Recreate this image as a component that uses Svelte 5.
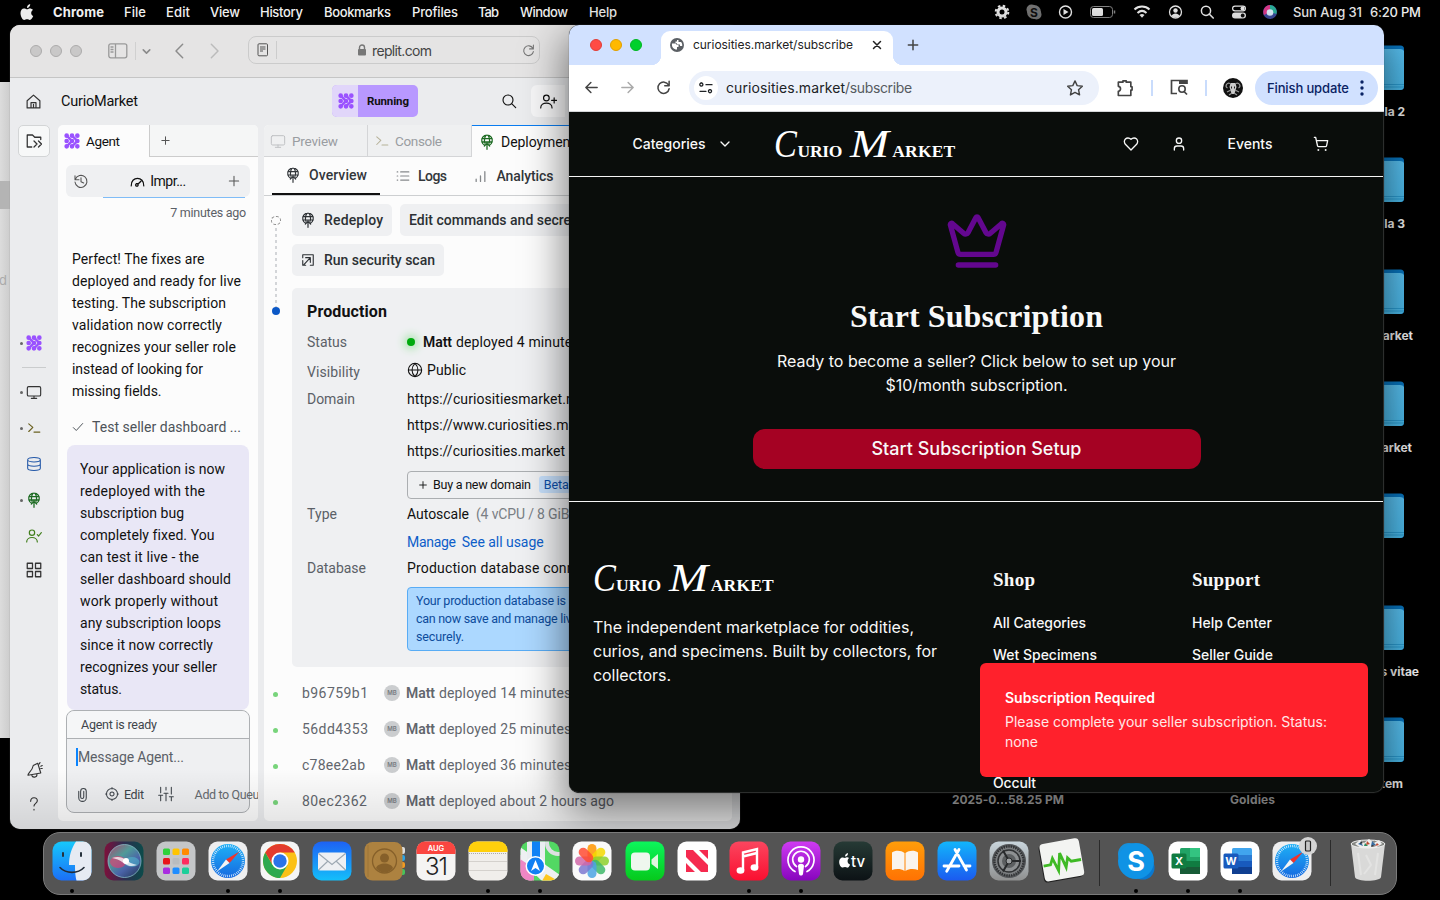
<script>
  // Tracks a label so that it takes up the given width.
  function fit(node, width) {
    if (!width) return;
    const natural = node.getBoundingClientRect().width;
    const n = node.textContent.length;
    if (n > 1) node.style.letterSpacing = (width - natural) / (n - 1) + 'px';
  }

  const icons = {
    home: 'M3 11 12 3l9 8v10H3zM8.500 21v-7.500h7V21M12 21v-5',
    files: 'M9 20H3V4h7l3 3h8v3M12 12l4 4-4 4M18 12l4 4-4 4',
    monitor: 'M4 4h16a2 2 0 0 1 2 2v10a2 2 0 0 1-2 2H4a2 2 0 0 1-2-2V6a2 2 0 0 1 2-2zM8 21.500h8M12 18v3',
    shell: 'M3 5l7 6-7 7M12 19h10',
    db: 'M2.500 5.500C2.500 1 21.500 1 21.500 5.500S2.500 10 2.500 5.500v13c0 4.500 19 4.500 19 0v-13M2.500 12c0 4.500 19 4.500 19 0',
    globeUp: 'M9 17a8 8 0 1 1 6 0M4.300 7h15.400M4.300 12h15.400M9 14C7 8 9 2 12 1.500c3 .5 5 6.500 3 12.500M12 23V12M8 18l4-4 4 4',
    userCheck: 'M9 11a4 4 0 1 0 0-8 4 4 0 0 0 0 8M1 21c0-9 16-9 16 0M17 10l2 2 4-5',
    grid: 'M3 3h7v7H3zM14 3h7v7h-7zM3 14h7v7H3zM14 14h7v7h-7z',
    horn: 'M11 6l6-3 4 13-17 3c-1-2 6-6 7-13zM9 19c1 4 7 3 7-1M19 4l1-2M21 7l2-1M21 10h2',
    help: 'M7 8c0-7 10-7 10-1 0 4-5 4-5 8M12 20v1',
    plus: 'M12 4v16M4 12h16',
    history: 'M3 4v6h6M3.500 9.500a9 9 0 1 1-.5 4M12 7v6l4 2',
    gauge: 'M2 19C1 3 23 3 22 19M12.500 16.500l5-5M11 15.500a2 2 0 1 0 .01 0',
    check: 'M4 13l5 5L20 6',
    clip: 'M6 7v10a6 6 0 0 0 12 0V7a4.500 4.500 0 0 0-9 0v9a2.500 2.500 0 0 0 5 0V7',
    target: 'M12 2.500a9.500 9.500 0 1 0 0 19 9.500 9.500 0 0 0 0-19M12 8.500a3.500 3.500 0 1 0 0 7 3.500 3.500 0 0 0 0-7M12 1v2M12 21v2M1 12h2M21 12h2',
    sliders: 'M4 2v8M4 14v8M1 14h6M12 2v4M12 11v11M9 11h6M20 2v10M20 16v6M17 16h6',
    search: 'M10.500 3a7.500 7.500 0 1 0 0 15 7.500 7.500 0 0 0 0-15M16 16l6 6',
    userPlus: 'M9 11a4 4 0 1 0 0-8 4 4 0 0 0 0 8M1 21c0-9 16-9 16 0M20 7v7M16.500 10.500h7',
    list: 'M8 5h14M8 12h14M8 19h14M2 5h1M2 12h1M2 19h1',
    bars: 'M4 17v4M12 11v10M20 3v18',
    scan: 'M3 8V3h18v18h-5M5 20L16 8M8 8h8v8M3 13v8h5',
    globe: 'M12 2a10 10 0 1 0 0 20 10 10 0 0 0 0-20M2 12h20M12 2c-6 6-6 14 0 20 6-6 6-14 0-20',
    left: 'M21 12H3M11 4l-8 8 8 8',
    right: 'M3 12h18M13 4l8 8-8 8',
    chevL: 'M16 2L6 12l10 10',
    chevR: 'M8 2l10 10L8 22',
    chevD: 'M6 9l6 6 6-6',
    reload: 'M20 8a9 9 0 1 0 1 6M21 2v7h-7',
    x: 'M5 5l14 14M19 5L5 19',
    star: 'M12 2.500l2.900 6.300 6.900.8-5.100 4.700 1.400 6.900-6.100-3.400-6.100 3.400 1.400-6.900L2.200 9.600l6.900-.8z',
    puzzle: 'M4 5h5.500V3.500h4V5H19v5.500h1.500v4H19V21H4v-5c3.500-.5 3.500-5.500 0-6z',
    tune: 'M5 4.500a2.300 2.300 0 1 0 .01 0M12 7h9M3 17h9M18 14.500a2.300 2.300 0 1 0 .01 0',
    heart: 'M19 14c1.500-1.500 3-3.200 3-5.500A5.500 5.500 0 0 0 16.500 3c-1.800 0-3 .5-4.500 2-1.500-1.500-2.700-2-4.500-2A5.500 5.500 0 0 0 2 8.500c0 2.300 1.500 4 3 5.500l7 7z',
    user: 'M19 21v-2a4 4 0 0 0-4-4H9a4 4 0 0 0-4 4v2M12 3a4 4 0 1 0 0 8 4 4 0 0 0 0-8',
    cart: 'M2 2h2l2.700 12.400a2 2 0 0 0 2 1.600h9.700a2 2 0 0 0 2-1.600L22 7H5.100M8 20.500a.5.5 0 1 0 .01 0M19 20.500a.5.5 0 1 0 .01 0',
    crown: 'M11.562 3.266a.5.5 0 0 1 .876 0L15.390 8.870a1 1 0 0 0 1.516.294L21.183 5.500a.5.5 0 0 1 .798.519l-2.834 10.246a1 1 0 0 1-.956.734H5.810a1 1 0 0 1-.957-.734L2.020 6.020a.5.5 0 0 1 .798-.519l4.276 3.664a1 1 0 0 0 1.516-.294zM5 21h14'
  };

  const menus = [['File', 22, 42], ['Edit', 24, 44], ['View', 30, 50], ['History', 43, 64], ['Bookmarks', 67, 88], ['Profiles', 46, 66], ['Tab', 21, 42], ['Window', 48, 69], ['Help', 28, 60]];
  const folders = [['la 2', 39], ['la 3', 39], ['arket', 31], ['arket', 32], ['', 0], ['s vitae', 25], ['tem', 41]];
  const message = [['Perfect! The fixes are', 132], ['deployed and ready for live', 169], ['testing. The subscription', 154], ['validation now correctly', 150], ['recognizes your seller role', 164], ['instead of looking for', 131], ['missing fields.', 89]];
  const bubble = [['Your application is now', 145], ['redeployed with the', 125], ['subscription bug', 104], ['completely fixed. You', 134], ['can test it live - the', 119], ['seller dashboard should', 151], ['work properly without', 138], ['any subscription loops', 141], ['since it now correctly', 133], ['recognizes your seller', 137], ['status.', 42]];
  const commits = [['b96759b1', 66, 'deployed 14 minutes ago', 160], ['56dd4353', 66, 'deployed 25 minutes ago', 160], ['c78ee2ab', 63, 'deployed 36 minutes ago', 160], ['80ec2362', 65, 'deployed about 2 hours ago', 175]];
  const dock = ['finder', 'siri', 'launchpad', 'safari', 'chrome', 'mail', 'contacts', 'calendar', 'notes', 'maps', 'photos', 'facetime', 'news', 'music', 'podcasts', 'tv', 'books', 'appstore', 'settings', 'activity'];
  const dockRight = ['skype', 'excel', 'word', 'safariPhone'];
  const running = ['finder', 'safari', 'chrome', 'notes', 'maps', 'music', 'podcasts', 'skype', 'excel', 'word'];
  const petals = ['#ff9500', '#f5d800', '#8ed02c', '#3fb86a', '#4ba3e3', '#7d78d0', '#d167a8', '#ff4b33'];
  const pads = ['#2fd13a', '#ffc400', '#ff8a00', '#e8151b', '#b9bcbf', '#ff2d5e', '#a92de0', '#1f8dff', '#1ccf9a'];
</script>

{#snippet ic(name, size = 16, sw = 1.6)}
  <svg class="ic" width={size} height={size} viewBox="0 0 24 24" stroke-width={sw}><path d={icons[name]} /></svg>
{/snippet}

{#snippet t(text, width)}<span class="t" use:fit={width}>{text}</span>{/snippet}

{#snippet agentMark()}
  <svg class="mark" width="16" height="16" viewBox="0 0 24 24">
    <path d="M4 4l8 8-8 8M12 4l8 8-8 8" stroke-width="3.600" />
    <path d="M4 4h.01M12 4h.01M20 4h.01M4 12h.01M12 12h.01M20 12h.01M4 20h.01M12 20h.01M20 20h.01" stroke-width="7" />
  </svg>
{/snippet}

{#snippet logo()}
  <div class="logo"><span class="swash c">C</span><span class="caps">{@render t('URIO', 45)}</span><span class="swash m">M</span><span class="caps">{@render t('ARKET', 63)}</span></div>
{/snippet}

{#snippet compass()}
  <circle cx="20" cy="20" r="17" fill="url(#blueSky)" />
  <circle cx="20" cy="20" r="15" fill="none" stroke="#e9f5ff" stroke-width="2.400" stroke-dasharray=".7 1.250" />
  <path d="M31.500 10.500 21.500 22 18 18.500z" fill="#f0332b" />
  <path d="M9 30.500 18 18.500 21.500 22z" fill="#f4f4f4" />
{/snippet}

{#snippet app(name)}
  <svg class="app" width="40" height="40" viewBox="0 0 40 40">
    {#if name === 'finder'}
      <rect x=".5" y=".5" width="39" height="39" rx="9" fill="url(#finderBlue)" />
      <path d="M24 .5H31a8.500 8.500 0 0 1 8.500 8.500v22a8.500 8.500 0 0 1-8.500 8.500h-6.500c-1-4-1.500-8-1.500-15.500h-6c0-9 2.500-17 7-23.500z" fill="#e6ebf3" />
      <path d="M11 12v3M29 12v3" stroke="#26323d" stroke-width="2" stroke-linecap="round" />
      <path d="M8 26.500c6 6.500 18 6.500 24 0" fill="none" stroke="#222c38" stroke-width="1.600" stroke-linecap="round" />
    {:else if name === 'siri'}
      <rect x=".5" y=".5" width="39" height="39" rx="9" fill="url(#siriBg)" />
      <circle cx="20.500" cy="20" r="16.500" fill="url(#siriOrb)" stroke="#8ec7d0" stroke-opacity=".7" />
      <ellipse cx="14" cy="21" rx="8" ry="6" fill="#f0356f" opacity=".6" />
      <ellipse cx="28" cy="21" rx="7.500" ry="5" fill="#52c4d6" opacity=".5" />
      <path d="M8 17c6-2 10-1 14 2 3 2 6 4 11 5-5 2-9 1-12-1-4-3-7-5-13-6z" fill="#fff" opacity=".75" />
      <circle cx="22" cy="20" r="3" fill="#fff" />
    {:else if name === 'launchpad'}
      <rect x=".5" y=".5" width="39" height="39" rx="9" fill="#c4c6c8" />
      {#each pads as p, i}<rect x={7 + (i % 3) * 9.500} y={7.500 + Math.floor(i / 3) * 9.500} width="7" height="6.500" rx="1.500" fill={p} />{/each}
    {:else if name === 'safari' || name === 'safariPhone'}
      <rect x=".5" y=".5" width="39" height="39" rx="9" fill="#eeeeef" />
      {@render compass()}
      {#if name === 'safariPhone'}
        <circle cx="36" cy="5" r="9" fill="#d5d5d5" />
        <rect x="33.500" y="0" width="5" height="10" rx="1" fill="#c5c5c5" stroke="#222" stroke-width="1.200" />
      {/if}
    {:else if name === 'chrome'}
      <rect x=".5" y=".5" width="39" height="39" rx="9" fill="#f5f5f5" />
      <circle cx="20" cy="20" r="17" fill="#fbc116" />
      <path d="M5.280 11.500A17 17 0 0 0 20 37l7.500-13L20 20 12.500 24z" fill="#2da94f" />
      <path d="M20 3a17 17 0 0 0-14.720 8.500l7 11.500 7.720-11.500h14.720A17 17 0 0 0 20 3z" fill="#e33b2e" />
      <circle cx="20" cy="20" r="8.500" fill="#fff" /><circle cx="20" cy="20" r="6.700" fill="#2a73e8" />
    {:else if name === 'mail'}
      <rect x=".5" y=".5" width="39" height="39" rx="9" fill="url(#mailBlue)" />
      <rect x="6" y="11.500" width="28" height="18" rx="2" fill="#eef0f3" />
      <path d="M6.500 12.500 20 23.500l13.500-11M6.500 29l9.500-9M33.500 29 24 20" fill="none" stroke="#9da8b2" stroke-width="1.100" />
    {:else if name === 'contacts'}
      <rect x="32" y="6" width="9" height="7" rx="2" fill="#ddd" /><rect x="32" y="14" width="9" height="6" rx="2" fill="#2aa4e8" />
      <rect x="32" y="21" width="9" height="6" rx="2" fill="#f29a22" /><rect x="32" y="28" width="9" height="6" rx="2" fill="#46c45c" />
      <rect x=".5" y="1" width="38" height="38.500" rx="8" fill="#ad8240" />
      <path d="M4 4v32" stroke="#9c7438" />
      <circle cx="20.500" cy="20" r="12" fill="none" stroke="#86602a" stroke-width="1.300" />
      <circle cx="20.500" cy="17" r="4.500" fill="#86602a" /><path d="M12 27c2-6 15-6 17 0-4 6-13 6-17 0z" fill="#86602a" />
    {:else if name === 'calendar'}
      <rect x=".5" y=".5" width="39" height="39" rx="9" fill="#f5f4f3" />
      <path d="M.5 13V9A8.500 8.500 0 0 1 9 .5h22A8.500 8.500 0 0 1 39.500 9v4z" fill="#fb4640" />
      <text x="20" y="10" text-anchor="middle" font-size="7.500" font-weight="600" fill="#fff">AUG</text>
      <text x="20" y="33.500" text-anchor="middle" font-size="24" font-weight="300" letter-spacing="-1" fill="#222">31</text>
    {:else if name === 'notes'}
      <rect x=".5" y=".5" width="39" height="39" rx="9" fill="#f0eeeb" />
      <path d="M.5 11V9A8.500 8.500 0 0 1 9 .5h22A8.500 8.500 0 0 1 39.500 9v2z" fill="#ffd00c" />
      <path d="M1 12.500h38" stroke="#aaa" stroke-dasharray="1 1" /><path d="M1 20.500h38M1 29.500h38" stroke="#d4d1cd" />
    {:else if name === 'maps'}
      <clipPath id="mapClip"><rect x=".5" y=".5" width="39" height="39" rx="9" /></clipPath>
      <g clip-path="url(#mapClip)">
        <rect width="40" height="40" fill="#52d863" />
        <path d="M0 14h14v26H0z" fill="#ef86c5" /><path d="M0 6 40 34v6H22L0 19z" fill="#eef0f2" /><path d="M0 18l12 8v14H0z" fill="#ef86c5" /><path d="M22 40l4-7 14 8v2H22z" fill="#fdc71f" />
        <path d="M7 0h5v26H7zM20 0h5v26h-5z" fill="#e9edf0" /><path d="M12 0h8v24h-8z" fill="#1182f5" />
        <circle cx="38" cy="2" r="11" fill="none" stroke="#dde0e2" stroke-width="4" />
      </g>
      <circle cx="15.500" cy="25" r="10" fill="#fff" /><circle cx="15.500" cy="25" r="8.500" fill="#1280f3" />
      <path d="M15.500 19l4.500 11-4.500-3-4.500 3z" fill="#fff" />
    {:else if name === 'photos'}
      <rect x=".5" y=".5" width="39" height="39" rx="9" fill="#fafafa" />
      {#each petals as p, i}<rect x="15.500" y="3" width="9" height="17" rx="4.500" fill={p} opacity=".85" transform="rotate({i * 45} 20 20)" />{/each}
    {:else if name === 'facetime'}
      <rect x=".5" y=".5" width="39" height="39" rx="9" fill="url(#green)" />
      <rect x="6" y="11.500" width="19" height="18" rx="4" fill="#eef7ee" /><path d="M26.500 18.500 33 13v15l-6.500-5z" fill="#e0f5e0" />
    {:else if name === 'news'}
      <rect x=".5" y=".5" width="39" height="39" rx="9" fill="#fff" />
      <path d="M9 9h7l15 15v7h-7L9 16zM22 9h9v9zM9 22l9 9H9z" fill="#f52a4f" />
    {:else if name === 'music'}
      <rect x=".5" y=".5" width="39" height="39" rx="9" fill="url(#musicRed)" />
      <path d="M14 29V11.500L28 8v18M14 15.500 28 12" fill="none" stroke="#fff" stroke-width="2.400" />
      <ellipse cx="11.500" cy="29.500" rx="3.900" ry="3.200" fill="#fff" /><ellipse cx="25.500" cy="26.500" rx="3.900" ry="3.200" fill="#fff" />
    {:else if name === 'podcasts'}
      <rect x=".5" y=".5" width="39" height="39" rx="9" fill="url(#purple)" />
      <path d="M14 30.500a13 13 0 1 1 12 0M15.500 25.500a8.300 8.300 0 1 1 9 0" fill="none" stroke="#fff" stroke-width="1.700" stroke-linecap="round" />
      <circle cx="20" cy="18.500" r="3.200" fill="#fff" /><path d="M17 25c0-3 6-3 6 0l-1 8c-.5 2-3.500 2-4 0z" fill="#fff" />
    {:else if name === 'tv'}
      <rect x=".5" y=".5" width="39" height="39" rx="9" fill="url(#tvDark)" />
      <path d="M16 17c-2-1.500-3 0-4 0s-2-1-4 0c-3 2-2 8 1 9.500 1 .4 2-.5 3-.5s2 1 3 .5c1-.7 2-2 2-3-3-1-3-5-1-6.500zM12 15.500c0-2 1-3 3-3.500 0 2-1 3.500-3 3.500z" fill="#fff" />
      <text x="18" y="26" font-size="15" font-weight="500" fill="#fff">tv</text>
    {:else if name === 'books'}
      <rect x=".5" y=".5" width="39" height="39" rx="9" fill="url(#orange)" />
      <path d="M19.500 12C16 9 10 9 7 11.500V29c4-1.500 9-1.500 12.500 1zM20.500 12C24 9 30 9 33 11.500V29c-4-1.500-9-1.500-12.500 1z" fill="#faf4ee" />
    {:else if name === 'appstore'}
      <rect x=".5" y=".5" width="39" height="39" rx="9" fill="url(#storeBlue)" />
      <path d="M22 8.500 11 28M18 8.500 29.500 29M7 25h15M27 25h6M11 28l-1.300 2.300" stroke="#fff" stroke-width="2.800" stroke-linecap="round" />
    {:else if name === 'settings'}
      <rect x=".5" y=".5" width="39" height="39" rx="9" fill="url(#silver)" />
      <circle cx="20" cy="20" r="17" fill="#54575a" /><circle cx="20" cy="20" r="14.500" fill="#7b7e80" stroke="#303234" stroke-width="2.500" stroke-dasharray="1.400 1" />
      <circle cx="20" cy="20" r="11" fill="#8d9092" stroke="#303234" stroke-width="1.500" />
      <circle cx="20" cy="20" r="7" fill="#5c5f61" /><path d="M20 20h12M20 20 14 9.500M20 20 14 30.500" stroke="#282a2c" stroke-width="2" /><circle cx="20" cy="20" r="3" fill="#9c9fa1" stroke="#282a2c" />
    {:else if name === 'activity'}
      <g transform="rotate(-10 20 20)"><rect x="0" y="1" width="40" height="38" rx="4" fill="#222" /><rect x="1" y="0" width="40" height="38" rx="4" fill="#f3f4f2" />
        <path d="M2 22h7l3-6 4 13 4-17 4 15 3-9 3 4h10" fill="none" stroke="#3fba25" stroke-width="2.800" /></g>
    {:else if name === 'skype'}
      <circle cx="13" cy="13" r="11" fill="#1690db" /><circle cx="27" cy="27" r="11.500" fill="#0a78cf" /><circle cx="20" cy="20" r="18" fill="#0f93e5" />
      <text x="20" y="29.500" text-anchor="middle" font-size="27" font-weight="700" fill="#fff">S</text>
    {:else if name === 'excel' || name === 'word'}
      <rect x=".5" y=".5" width="39" height="39" rx="9" fill="#fff" />
      {#if name === 'excel'}
        <rect x="12" y="7" width="20" height="26" rx="1.500" fill="#21a366" /><path d="M22 7h10v9H22z" fill="#33c481" /><path d="M12 20h20v6H12z" fill="#107c41" /><path d="M12 26h20v7H12z" fill="#185c37" />
        <rect x="3.500" y="12.500" width="15" height="15" rx="1.500" fill="#107c41" />
      {:else}
        <rect x="12" y="7" width="20" height="26" rx="1.500" fill="#41a5ee" /><path d="M12 14h20v6H12z" fill="#2b7cd3" /><path d="M12 20h20v6H12z" fill="#185abd" /><path d="M12 26h20v7H12z" fill="#103f91" />
        <rect x="3.500" y="12.500" width="15" height="15" rx="1.500" fill="#185abd" />
      {/if}
      <text x="11" y="24" text-anchor="middle" font-size="11" font-weight="700" fill="#fff">{name === 'excel' ? 'X' : 'W'}</text>
    {:else if name === 'trash'}
      <path d="M3 3l4 33c1 5 25 5 26 0L37 3z" fill="#d9d9d8" /><ellipse cx="20" cy="3" rx="17" ry="4" fill="#858783" stroke="#f1f1f1" />
      <path d="M7 3l5-4 4 3 5-4 5 4 5-3 3 4-7 4H13z" fill="#eee" /><path d="M10 3l3-2 2 4zM24 0l4 4-5 1z" fill="#396ca0" /><path d="M17 2l3 3h-4z" fill="#298f61" /><path d="M29 2l2 2-4 1zM19 0l3 3-4 1z" fill="#bc4b34" /><path d="M13 0l2 2-3 1zM24 4l4 1-5 1z" fill="#333" />
      <path d="M10 12l3 22M30 12l-3 22M18 14l5 10-7 9" stroke="#e3e3e2" stroke-width="2" fill="none" />
    {/if}
  </svg>
{/snippet}

{#snippet slot(name)}
  <div class="slot">{@render app(name)}<i class:on={running.includes(name)}></i></div>
{/snippet}

<svg class="defs" width="0" height="0">
  <defs>
    <linearGradient id="finderBlue" x2="0" y2="1"><stop stop-color="#16c8fb" /><stop offset="1" stop-color="#1b6ff7" /></linearGradient>
    <linearGradient id="siriBg"><stop stop-color="#7d103b" /><stop offset=".5" stop-color="#2d2d50" /><stop offset="1" stop-color="#0b4b4a" /></linearGradient>
    <linearGradient id="siriOrb" x2=".8" y2="1"><stop stop-color="#b0436c" /><stop offset=".4" stop-color="#4f9a98" /><stop offset=".7" stop-color="#4a63a8" /><stop offset="1" stop-color="#2a3f66" /></linearGradient>
    <linearGradient id="blueSky" x2="0" y2="1"><stop stop-color="#1fb0f6" /><stop offset="1" stop-color="#1569e0" /></linearGradient>
    <linearGradient id="mailBlue" x2="0" y2="1"><stop stop-color="#1e62f3" /><stop offset="1" stop-color="#14bffa" /></linearGradient>
    <linearGradient id="green" x2="0" y2="1"><stop stop-color="#0cf55c" /><stop offset="1" stop-color="#06c91c" /></linearGradient>
    <linearGradient id="musicRed" x2="0" y2="1"><stop stop-color="#fb465f" /><stop offset="1" stop-color="#fa0f30" /></linearGradient>
    <linearGradient id="purple" x2="0" y2="1"><stop stop-color="#cf3bf2" /><stop offset="1" stop-color="#8706bd" /></linearGradient>
    <linearGradient id="tvDark" x2="0" y2="1"><stop stop-color="#263a35" /><stop offset="1" stop-color="#0c1215" /></linearGradient>
    <linearGradient id="orange" x2="0" y2="1"><stop stop-color="#ff9d0a" /><stop offset="1" stop-color="#ff7203" /></linearGradient>
    <linearGradient id="storeBlue" x2="0" y2="1"><stop stop-color="#12b5fb" /><stop offset="1" stop-color="#1b5af0" /></linearGradient>
    <linearGradient id="silver" x2="0" y2="1"><stop stop-color="#c9d5dc" /><stop offset="1" stop-color="#8f9090" /></linearGradient>
    <linearGradient id="folder" x2="0" y2="1"><stop stop-color="#58c0f0" /><stop offset="1" stop-color="#4ab8e8" /></linearGradient>
  </defs>
</svg>

<div class="desktop">
  <div class="icons">
    {#each folders as [label, pad]}
      <div class="folder">
        <svg width="60" height="46" viewBox="0 0 60 46"><rect x="0" y=".5" width="60" height="44.500" rx="3.500" fill="#0874bd" /><path d="M0 4h56q3 0 4 2v35q0 4-4 4H0z" fill="url(#folder)" /><path d="M0 39.500h60M0 42h60" stroke="#2b9bd0" /></svg>
        <span style:padding-right="{pad}px">{label}</span>
      </div>
    {/each}
  </div>
  <div class="filename first">{@render t('2025-0...58.25 PM', 112)}</div>
  <div class="filename second">{@render t('Goldies', 45)}</div>

  <header class="menubar">
    <svg class="apple" width="14" height="17" viewBox="0 0 14 17"><path d="M10 4.500c-1.500 0-2 .8-2.800.8S5.500 4.500 4 4.500C2 4.500.5 6.300.5 9c0 3.500 2 7 3.800 7 1 0 1.500-.7 2.800-.7s1.700.7 2.700.7c1.600 0 2.800-2.500 3.400-4-2.600-1-2.600-4.700-.2-6-.8-1-1.900-1.500-3-1.500zM7 4C6.800 2 8.500.2 10.200 0 10.400 2.200 8.700 4 7 4z" fill="#ececec" /></svg>
    <b>{@render t('Chrome', 51)}</b>
    {#each menus as [label, w, cell]}<span class="menu" style:width="{cell}px">{@render t(label, w)}</span>{/each}
    <div class="status">
      <svg width="32" height="20" viewBox="0 0 32 20"><circle cx="16" cy="10" r="4" fill="none" stroke="#eee" stroke-width="3" /><circle cx="16" cy="10" r="6.300" fill="none" stroke="#eee" stroke-width="2" stroke-dasharray="2.500 2.450" /></svg>
      <svg width="32" height="20" viewBox="0 0 32 20"><circle cx="13.500" cy="7.500" r="5" fill="#777" /><circle cx="18.500" cy="12.500" r="5" fill="#777" /><circle cx="16" cy="10" r="7" fill="#777" /><text x="16" y="14.500" text-anchor="middle" font-size="12" font-weight="700" fill="#111">S</text></svg>
      <svg width="32" height="20" viewBox="0 0 32 20"><circle cx="15.500" cy="10" r="6" fill="none" stroke="#eee" stroke-width="1.400" /><path d="M13.500 7l5 3-5 3z" fill="#eee" /></svg>
      <svg width="42" height="20" viewBox="0 0 42 20"><rect x="8.500" y="4.500" width="22" height="11" rx="3" fill="none" stroke="#888" /><rect x="10" y="6" width="11" height="8" rx="1.500" fill="#eee" /><path d="M32.500 8.500v3" stroke="#888" stroke-width="1.500" /></svg>
      <svg width="36" height="20" viewBox="0 0 36 20"><path d="M10.500 7.500c4-4 11-4 15 0M13.500 11c3-2.800 6-2.800 9 0" fill="none" stroke="#eee" stroke-width="2" /><path d="M15.500 13c1.600-1.200 3.400-1.200 5 0L18 15.800z" fill="#eee" /></svg>
      <svg width="32" height="20" viewBox="0 0 32 20"><circle cx="15.500" cy="10" r="6" fill="none" stroke="#eee" stroke-width="1.300" /><circle cx="15.500" cy="8.500" r="2.200" fill="#eee" /><path d="M11.500 14c1-3.500 7-3.500 8 0-2 2-6 2-8 0z" fill="#eee" /></svg>
      <svg width="32" height="20" viewBox="0 0 32 20"><circle cx="14" cy="8.800" r="4.600" fill="none" stroke="#eee" stroke-width="1.500" /><path d="M17.200 12l4 4" stroke="#eee" stroke-width="1.700" stroke-linecap="round" /></svg>
      <svg width="32" height="20" viewBox="0 0 32 20"><rect x="8.600" y="4.100" width="12.800" height="4.800" rx="2.400" fill="none" stroke="#eee" stroke-width="1.200" /><circle cx="18.500" cy="6.500" r="2" fill="#eee" /><rect x="8" y="10.500" width="14" height="6" rx="3" fill="#eee" /><circle cx="18.700" cy="13.500" r="1.900" fill="#111" /></svg>
      <svg width="30" height="20" viewBox="0 0 30 20"><circle cx="14" cy="10" r="7" fill="#3d4b9e" /><path d="M14 3a7 7 0 0 0-6 10l6-3z" fill="#e0398b" /><path d="M14 3a7 7 0 0 1 6.500 9L14 10z" fill="#2bb29a" /><circle cx="14" cy="10.500" r="3.300" fill="#dff2ff" /></svg>
      <span class="clock">{@render t('Sun Aug 31', 69)}{@render t('6:20 PM', 51)}</span>
    </div>
  </header>

  <div class="behind"><div></div><span>d</span></div>

  <section class="safari">
    <div class="sbar">
      <div class="lights grey"><i></i><i></i><i></i></div>
      <svg class="side" width="20" height="16" viewBox="0 0 20 16"><rect x=".8" y=".8" width="18" height="14" rx="2" /><path d="M7.500 1v14M2.500 4h3M2.500 6.500h3M2.500 9h3" /></svg>
      <i class="vline"></i>
      <span class="c1">{@render ic('chevD', 13, 3)}</span>
      <span class="c2">{@render ic('chevL', 16, 2.2)}</span>
      <span class="c3">{@render ic('chevR', 16, 2.2)}</span>
      <div class="address">
        <svg width="12" height="14" viewBox="0 0 12 14"><rect x="1" y=".8" width="9.500" height="12" rx="1" fill="none" stroke="#555" /><path d="M3 4h5.500M3 6h5.500M3 8h3" stroke="#555" /></svg>
        <i></i>
        <svg class="lock" width="10" height="12" viewBox="0 0 10 12"><path d="M2.500 6V3.500a2.500 2.500 0 0 1 5 0V6" fill="none" stroke="#777" stroke-width="1.400" /><rect x="1" y="5" width="8" height="6.500" rx="1" fill="#777" /></svg>
        {@render t('replit.com', 60)}
        <span class="rl">{@render ic('reload', 13, 2)}</span>
      </div>
    </div>
    <div class="rhead">
      {@render ic('home', 17, 1.7)}
      <span class="proj">{@render t('CurioMarket', 77)}</span>
      <div class="run"><span>{@render agentMark()}</span><b>{@render t('Running', 42)}</b></div>
      <span class="find">{@render ic('search', 16, 1.7)}</span>
      <span class="invite">{@render ic('userPlus', 17, 1.7)}</span>
    </div>
    <div class="rbody">
      <nav class="rail">
        <span class="files">{@render ic('files', 18, 1.7)}</span>
        <div class="tools">
          <span class="tool dot">{@render agentMark()}</span>
          <hr />
          <span class="tool dot">{@render ic('monitor', 16, 1.7)}</span>
          <span class="tool dot olive">{@render ic('shell', 14, 2)}</span>
          <span class="tool blue">{@render ic('db', 16, 1.6)}</span>
          <span class="tool dot green">{@render ic('globeUp', 16, 1.9)}</span>
          <span class="tool leaf">{@render ic('userCheck', 16, 1.8)}</span>
          <span class="tool last">{@render ic('grid', 18, 1.7)}</span>
        </div>
        <div class="foot"><span>{@render ic('horn', 18, 1.5)}</span><span>{@render ic('help', 16, 1.7)}</span></div>
      </nav>

      <div class="panel agent">
        <div class="tabs"><span class="tab">{@render agentMark()}{@render t('Agent', 34)}</span><span class="rest">{@render ic('plus', 11, 2.2)}</span></div>
        <div class="chat">
          <div class="topic">{@render ic('history', 16, 1.6)}<span>{@render ic('gauge', 15, 2)}{@render t('Impr...', 36)}</span>{@render ic('plus', 14, 1.8)}</div>
          <i class="progress"></i>
          <div class="when">{@render t('7 minutes ago', 76)}</div>
          <div class="msg">{#each message as [l, w]}<div>{@render t(l, w)}</div>{/each}</div>
          <div class="step">{@render ic('check', 14, 1.7)}{@render t('Test seller dashboard ...', 149)}</div>
          <div class="bubble">{#each bubble as [l, w]}<div>{@render t(l, w)}</div>{/each}</div>
          <div class="composer">
            <div class="ready">{@render t('Agent is ready', 76)}</div>
            <div class="field">{@render t('Message Agent...', 106)}</div>
            <div class="actions">
              <span>{@render ic('clip', 15, 1.7)}</span><span class="ed">{@render ic('target', 14, 1.8)}{@render t('Edit', 20)}</span><span class="sl">{@render ic('sliders', 16, 1.6)}</span><span class="q">{@render t('Add to Queue', 71)}</span>
            </div>
          </div>
        </div>
      </div>

      <div class="panel deploy">
        <div class="tabs">
          <span class="dim tab1">{@render ic('monitor', 16, 1.5)}{@render t('Preview', 46)}</span>
          <span class="dim tab2">{@render ic('shell', 14, 1.8)}{@render t('Console', 47)}</span>
          <span class="active">{@render ic('globeUp', 16, 1.9)}{@render t('Deployments', 81)}</span>
        </div>
        <div class="subnav">
          <span class="cur">{@render ic('globeUp', 16, 1.8)}{@render t('Overview', 58)}</span>
          <span class="logs">{@render ic('list', 14, 2)}{@render t('Logs', 29)}</span>
          <span class="ana">{@render ic('bars', 13, 2.4)}{@render t('Analytics', 57)}</span>
        </div>
        <div class="dbody">
          <div class="timeline"><i class="ring"></i><i class="dash"></i><i class="now"></i><i class="solid"></i></div>
          <div class="dmain">
            <div class="btns"><span class="btn">{@render ic('globeUp', 16, 1.8)}{@render t('Redeploy', 59)}</span><span class="btn wide">{@render t('Edit commands and secrets', 174)}</span></div>
            <div class="btns"><span class="btn scan">{@render ic('scan', 14, 1.9)}{@render t('Run security scan', 111)}</span></div>
            <div class="card">
              <h3>{@render t('Production', 80)}</h3>
              <div class="row status-row"><label>{@render t('Status', 40)}</label><i class="live"></i><b>{@render t('Matt', 29)}</b>{@render t('deployed 4 minutes ago', 151)}</div>
              <div class="row vis"><label>{@render t('Visibility', 53)}</label>{@render ic('globe', 16, 1.6)}<span class="pub">{@render t('Public', 39)}</span></div>
              <div class="row domain"><label>{@render t('Domain', 48)}</label>{@render t('https://curiositiesmarket.replit.app', 218)}</div>
              <div class="row"><label></label>{@render t('https://www.curiosities.market', 193)}</div>
              <div class="row"><label></label>{@render t('https://curiosities.market', 158)}</div>
              <div class="buy">{@render ic('plus', 10, 2.2)}{@render t('Buy a new domain', 98)}<b>{@render t('Beta', 25)}</b></div>
              <div class="row type"><label>{@render t('Type', 30)}</label>{@render t('Autoscale', 62)}<span class="mem">{@render t('(4 vCPU / 8 GiB RAM)', 131)}</span></div>
              <div class="row links"><label></label>{@render t('Manage', 49)}{@render t('See all usage', 82)}</div>
              <div class="row"><label>{@render t('Database', 59)}</label>{@render t('Production database connected', 203)}</div>
              <div class="note"><div>{@render t('Your production database is', 150)}</div><div>{@render t('can now save and manage live', 162)}</div><div>{@render t('securely.', 48)}</div></div>
            </div>
            <div class="commits">
              {#each commits as [hash, hw, text, w]}
                <div class="commit"><span class="hash">{@render t(hash, hw)}</span><i>MB</i><b>{@render t('Matt', 29)}</b>{@render t(text, w)}</div>
              {/each}
            </div>
          </div>
        </div>
      </div>
    </div>
  </section>

  <section class="browser">
    <div class="strip">
      <div class="lights"><i></i><i></i><i></i></div>
      <div class="ctab">
        <svg width="14" height="14" viewBox="0 0 14 14"><circle cx="7" cy="7" r="7" fill="#5b5f64" /><path d="M2 5.500h4.500v1.500h2V9H7v2.500C3.500 11.500 1.500 9 2 5.500zM7 2h1.500v2H11c1 1 1.500 2.500 1.200 4H10V6.500H7V5H5.500V3.500H7z" fill="#fff" /></svg>
        {@render t('curiosities.market/subscribe', 160)}
        <span>{@render ic('x', 12, 3)}</span>
      </div>
      <span class="new">{@render ic('plus', 14, 2.6)}</span>
    </div>
    <div class="ctools">
      <span class="cell">{@render ic('left', 15, 2.4)}</span><span class="cell off">{@render ic('right', 15, 2.4)}</span><span class="cell">{@render ic('reload', 15, 2.4)}</span>
      <div class="omni"><span class="tune">{@render ic('tune', 16, 2)}</span><span>{@render t('curiosities.market', 119)}</span><em>{@render t('/subscribe', 67)}</em><span class="fav">{@render ic('star', 18, 1.9)}</span></div>
      <span class="cell ext">{@render ic('puzzle', 20, 2)}</span><i></i>
      <span class="cell ext"><svg width="20" height="17" viewBox="0 0 20 17"><path d="M8 14.500H2.500v-13H18V5" fill="none" stroke="#444" stroke-width="1.700" /><path d="M10 1h8v4h-8z" fill="#444" /><circle cx="13" cy="10" r="3.200" fill="none" stroke="#444" stroke-width="1.600" /><path d="M15 12.500l3 3" stroke="#444" stroke-width="1.700" /></svg></span><i></i>
      <span class="cell ava"><svg width="20" height="20" viewBox="0 0 20 20"><circle cx="10" cy="10" r="10" fill="#111" /><path d="M7.500 5h5l1 4-2 7h-3l-2-7z" fill="#ccc" /><path d="M7 5.500C3 4 2 9 4.500 10M13 5.500c4-1.500 5 3.500 2.500 4.500M4 14l4-2M16 14l-4-2M6 17l3-2M14 17l-3-2" fill="none" stroke="#999" stroke-width="1.200" /><path d="M8.500 8.500v2M11.500 8.500v2" stroke="#222" /></svg></span>
      <div class="update">{@render t('Finish update', 82)}<svg width="4" height="16" viewBox="0 0 4 16"><circle cx="2" cy="2" r="1.700" /><circle cx="2" cy="8" r="1.700" /><circle cx="2" cy="14" r="1.700" /></svg></div>
    </div>
    <div class="page">
      <div class="phead">
        <span class="cat">{@render t('Categories', 73)}</span><span class="cd">{@render ic('chevD', 16, 2)}</span>
        {@render logo()}
        <span class="h">{@render ic('heart', 16, 2)}</span><span class="u">{@render ic('user', 16, 2)}</span>
        <span class="ev">{@render t('Events', 45)}</span>
        <span class="ct">{@render ic('cart', 16, 2)}</span>
      </div>
      <main>
        <span class="crown">{@render ic('crown', 64, 2)}</span>
        <h1>{@render t('Start Subscription', 253)}</h1>
        <p>{@render t('Ready to become a seller? Click below to set up your', 399)}</p>
        <p>{@render t('$10/month subscription.', 182)}</p>
        <div class="cta">{@render t('Start Subscription Setup', 210)}</div>
      </main>
      <footer>
        <div class="about">
          {@render logo()}
          <p>{@render t('The independent marketplace for oddities,', 321)}</p>
          <p>{@render t('curios, and specimens. Built by collectors, for', 344)}</p>
          <p>{@render t('collectors.', 78)}</p>
        </div>
        <div class="col"><h4>{@render t('Shop', 42)}</h4><div>{@render t('All Categories', 93)}</div><div>{@render t('Wet Specimens', 104)}</div><div class="late">{@render t('Occult', 43)}</div></div>
        <div class="col"><h4>{@render t('Support', 68)}</h4><div>{@render t('Help Center', 80)}</div><div>{@render t('Seller Guide', 81)}</div></div>
      </footer>
    </div>
    <div class="toast"><b>{@render t('Subscription Required', 150)}</b><div>{@render t('Please complete your seller subscription. Status:', 322)}</div><div>{@render t('none', 33)}</div></div>
  </section>

  <div class="dock">
    {#each dock as name}{@render slot(name)}{/each}
    <i class="sep"></i>
    {#each dockRight as name}{@render slot(name)}{/each}
    <i class="sep second"></i>
    <div class="slot">{@render app('trash')}<i></i></div>
  </div>
</div>

<style>
  :global(body) { margin: 0; background: #000; }
  .defs { position: absolute; }
  .desktop { position: relative; width: 1440px; height: 900px; overflow: hidden; background: #000; font-family: Inter, "Liberation Sans", sans-serif; font-size: 14px; }
  .desktop * { box-sizing: border-box; }
  .desktop i { font-style: normal; flex: none; }
  svg { flex: none; display: block; }
  .t { display: inline-block; white-space: pre; flex: none; }
  .ic { fill: none; stroke: currentColor; stroke-linecap: round; stroke-linejoin: round; }
  .mark { fill: none; stroke: #9a52ff; stroke-linecap: round; }

  .menubar { display: flex; align-items: center; height: 24px; padding-left: 20px; color: #f0f0f0; font-size: 13px; font-weight: 500; position: relative; }
  .menubar b { width: 71px; margin-left: 19px; font-weight: 700; }
  .status { display: flex; align-items: center; margin-left: auto; }
  .clock { display: flex; gap: 8px; width: 154px; padding-left: 7px; }

  .icons { position: absolute; right: 36px; top: 45px; width: 60px; }
  .folder { height: 112px; display: flex; flex-direction: column; }
  .folder span { width: 100px; margin-top: 13px; text-align: right; color: #ececec; font-size: 12px; font-weight: 700; line-height: 16px; white-space: nowrap; align-self: flex-start; }
  .filename { position: absolute; top: 792px; line-height: 16px; font-size: 12px; font-weight: 700; color: #b5b5b5; }
  .filename.first { left: 952px; }
  .filename.second { left: 1230px; }

  .behind { position: absolute; left: 0; top: 82px; width: 14px; height: 656px; background: linear-gradient(90deg, #dcdcdc, #c6c6c6); color: #aaa; padding-top: 99px; }
  .behind div { height: 28px; background: #b4b4b4; margin-bottom: 62px; }
  .behind span { display: block; margin-left: -1px; font-size: 13px; line-height: 18px; }

  .lights { display: flex; gap: 8px; }
  .lights i { width: 12px; height: 12px; border-radius: 50%; background: #ff4b44; border: 1px solid #e03e38; }
  .lights i:nth-child(2) { background: #ffb900; border-color: #e0a000; }
  .lights i:nth-child(3) { background: #00d02c; border-color: #00b622; }
  .lights.grey i { background: #c9c8c8; border-color: #acabab; }

  .safari { position: absolute; left: 10px; top: 25px; width: 730px; height: 804px; border-radius: 10px; overflow: hidden; background: #ebecee; color: #111; font-family: Roboto, sans-serif; box-shadow: 0 0 1px #777; }
  .safari::after { content: ""; position: absolute; inset: auto 0 0; height: 60px; background: linear-gradient(transparent, rgba(0, 0, 0, .1)); }
  .sbar { display: flex; align-items: center; height: 53px; background: #e5e4e4; border-bottom: 1px solid #c5c5c5; padding-left: 20px; color: #8c8c8c; }
  .side { margin-left: 26px; fill: none; stroke: #999; stroke-width: 1.300; }
  .vline { width: 1px; height: 18px; background: #d0d0d0; margin-left: 7px; }
  .c1 { margin-left: 4px; } .c2 { margin-left: 19px; } .c3 { margin-left: 18px; color: #bbb; }
  .address { display: flex; align-items: center; width: 292px; height: 28px; margin: -2px 0 0 26px; padding-left: 8px; border: 1px solid #cbcbcb; border-radius: 8px; font: 400 14px Inter, sans-serif; color: #444; }
  .address > i { width: 1px; height: 18px; margin-left: 7px; background: #ccc; }
  .lock { margin: 0 5px 0 80px; }
  .rl { margin-left: 91px; color: #777; }
  .rhead { display: flex; align-items: center; height: 47px; padding: 0 0 1px 15px; }
  .rhead > :global(svg) { color: #333; }
  .proj { width: 271px; margin-left: 19px; font-size: 14.500px; }
  .run { display: flex; width: 86px; height: 32px; border-radius: 5px; overflow: hidden; background: #b898ff; }
  .run span:not(.t) { width: 26px; display: grid; place-items: center; background: #e1d6fa; padding-left: 2px; }
  .run b { flex: 1; padding-left: 9px; line-height: 32px; font-size: 11.500px; font-weight: 700; }
  .find { margin-left: 83px; }
  .invite { display: grid; place-items: center; width: 34px; height: 32px; margin-left: 14px; border-radius: 6px 0 0 6px; background: #f7f7f8; }
  .rbody { display: flex; height: 696px; }
  .rail { width: 48px; display: flex; flex-direction: column; align-items: center; color: #333; }
  .files { display: grid; place-items: center; width: 32px; height: 32px; border: 1px solid #d3d5d6; border-radius: 5px; background: #f7f8f8; }
  .tools { margin-top: 168px; width: 48px; }
  .tool { position: relative; display: grid; place-items: center; height: 36px; }
  .tool.dot::before { content: ""; position: absolute; left: 10px; top: 17px; width: 3px; height: 3px; border-radius: 50%; background: #666; }
  .tools hr { width: 24px; margin: 6px auto 6px; border: 0; border-top: 1px solid #cacccd; }
  .olive { color: #6b6120; } .blue { color: #2358a8; } .green { color: #1c6a22; } .leaf { color: #417e1c; }
  .tool.last { height: 32px; }
  .foot { margin-top: auto; }
  .foot span { display: grid; place-items: center; height: 34px; }

  .panel { background: #fcfcfc; border-radius: 5px; overflow: hidden; }
  .agent { width: 200px; }
  .tabs { display: flex; height: 32px; }
  .tab { display: flex; align-items: center; gap: 6px; width: 92px; padding-left: 6px; border-right: 1px solid #ccc; font-size: 13.500px; }
  .rest { display: flex; align-items: center; flex: 1; padding-left: 10px; background: #f5f6f6; border-bottom: 1px solid #ccc; color: #555; }
  .chat { padding: 8px 8px 0; height: 664px; display: flex; flex-direction: column; }
  .topic { display: flex; align-items: center; justify-content: space-between; height: 32px; padding: 0 9px 0 7px; border-radius: 6px; background: #eff0f2; color: #555; flex: none; }
  .topic > span { display: flex; gap: 5px; color: #111; align-items: center; }
  .progress { height: 1px; margin: 0 5px 0 37px; background: #7fbcf7; }
  .when { height: 30px; line-height: 30px; padding-right: 4px; text-align: right; color: #5b6067; font-size: 12.500px; flex: none; }
  .msg { margin: 20px 0 0 6px; line-height: 22px; height: 154px; flex: none; }
  .msg div, .bubble div { height: 22px; }
  .step { display: flex; align-items: center; gap: 7px; margin: 14px 0 0 5px; height: 22px; color: #4d5359; flex: none; }
  .bubble { margin: 7px 1px 0; padding: 13px 13px 0; height: 265px; line-height: 22px; border-radius: 8px; background: #e9e7f6; flex: none; }
  .composer { height: 103px; border: 1px solid #adb0b3; border-radius: 8px; background: #eff0f2; color: #5b6067; flex: none; }
  .ready { height: 28px; line-height: 27px; padding-left: 14px; border-bottom: 1px solid #adb0b3; background: #f5f6f7; color: #3f454b; font-size: 12.500px; border-radius: 8px 8px 0 0; }
  .field { display: flex; align-items: center; height: 18px; margin: 9px 0 0 9px; border-left: 2px solid #0a84ff; }
  .actions { display: flex; align-items: center; margin-top: 18px; padding-left: 8px; height: 20px; color: #3f454b; font-size: 12.500px; white-space: nowrap; }
  .actions span:not(.t) { flex: none; }
  .ed { display: flex; align-items: center; gap: 5px; margin-left: 15px; }
  .sl { margin-left: 14px; } .q { margin-left: 21px; color: #666b70; }
  .deploy { width: 468px; margin-left: 6px; }
  .deploy .tabs span:not(.t) { display: flex; align-items: center; gap: 6px; }
  .deploy .dim { background: #eff0f1; border-bottom: 1px solid #d4d5d7; border-right: 1px solid #d4d5d7; color: #9a9da1; font-size: 13.500px; }
  .dim :global(svg) { opacity: .55; }
  .deploy .tabs .tab1 { width: 104px; padding-left: 6px; }
  .deploy .tabs .tab2 { width: 104px; padding-left: 7px; gap: 8px; }
  .deploy .tab2 :global(svg) { color: #8a8153; }
  .deploy .active { flex: 1; padding-left: 7px; border-top: 1px solid #0a7cf0; }
  .deploy .active :global(svg) { color: #1c6a22; }
  .subnav { display: flex; height: 39px; border-bottom: 1px solid #cdcfd1; padding-left: 8px; font-weight: 500; font-size: 14px; color: #33373b; }
  .subnav span:not(.t) { display: flex; align-items: center; }
  .subnav .cur { width: 108px; gap: 8px; padding-left: 13px; border-bottom: 2px solid #111; }
  .logs { gap: 8px; margin-left: 16px; } .ana { gap: 9px; margin-left: 28px; }
  .subnav .logs :global(svg), .subnav .ana :global(svg) { color: #85888b; }
  .dbody { display: flex; height: 625px; }
  .timeline { width: 28px; display: flex; flex-direction: column; align-items: center; padding: 20px 4px 0 0; }
  .ring { width: 10px; height: 9px; border: 1px dashed #888; border-radius: 50%; }
  .dash { width: 2px; height: 82px; background: repeating-linear-gradient(#fcfcfc 0 3px, #d3d5d8 3px 6px); }
  .now { width: 8px; height: 8px; border-radius: 50%; background: #0b58c6; }
  .solid { width: 2px; flex: 1; background: #dfe0e1; }
  .dmain { flex: 1; padding-top: 8px; }
  .btns { display: flex; gap: 8px; height: 32px; margin-bottom: 8px; font-weight: 500; font-size: 14px; }
  .btn { display: flex; align-items: center; gap: 8px; width: 100px; padding-left: 8px; border-radius: 5px; background: #eff0f2; color: #2c3034; flex: none; }
  .btn.wide { width: 200px; padding-left: 9px; } .btn.scan { width: 152px; gap: 9px; padding-left: 9px; }
  .card { margin-top: 12px; height: 379px; width: 420px; padding: 12px 0 0 15px; border-radius: 5px; background: #eff0f2; }
  h3 { margin: 0; height: 22px; line-height: 23px; font-size: 16px; font-weight: 700; }
  .row { display: flex; align-items: center; height: 26px; }
  label { width: 100px; color: #5b6067; }
  .status-row { height: 39px; } .vis { height: 17px; } .vis label { padding-top: 5px; }
  .domain { margin-top: 8px; }
  .live { width: 8px; height: 8px; border-radius: 50%; background: #00aa0e; box-shadow: 0 0 9px 3px #a9e4ae; margin-right: 8px; }
  .card b, .commit b { font-weight: 600; margin-right: 4px; }
  .pub { margin-left: 4px; }
  .buy { display: flex; align-items: center; width: 250px; height: 28px; margin: 7px 0 2px 100px; padding: 0 0 1px 10px; border: 1px solid #abaeb1; border-radius: 4px; font-size: 12.500px; gap: 5px; }
  .buy b { margin-left: 3px; padding: 1px 5px; border-radius: 3px; background: #c5defa; color: #0b4da8; font-weight: 400; }
  .mem { margin-left: 7px; color: #7a7f85; }
  .links { gap: 6px; margin-top: 2px; height: 26px; color: #0d5ec9; }
  .links label { margin-right: -6px; }
  .note { width: 300px; height: 64px; margin: 6px 0 0 100px; padding: 4px 8px; border: 1px solid #58acf5; border-radius: 4px; background: #acd8ff; color: #0c4c9c; font-size: 12.500px; line-height: 18px; }
  .note div { height: 18px; }
  .commits { padding-top: 8px; }
  .commit { position: relative; display: flex; align-items: center; height: 36px; padding-left: 10px; color: #62666d; }
  .commit::before { content: ""; position: absolute; left: -19px; top: 17px; width: 5px; height: 5px; border-radius: 50%; background: #78d47b; }
  .hash { width: 82px; }
  .commit i { width: 16px; height: 16px; margin-right: 6px; border-radius: 50%; background: #cbcdcf; color: #777b80; font: 600 6px/16px Inter, sans-serif; text-align: center; }

  .browser { position: absolute; left: 569px; top: 25px; width: 815px; height: 768px; border-radius: 10px; overflow: hidden; background: #0a0d0b; box-shadow: 0 0 1px #333, 0 14px 42px 4px rgba(0, 0, 0, .5); }
  .browser::after { content: ""; position: absolute; inset: 87px 0 0; border: solid #2c2e2d; border-width: 0 1px 1px 0; border-radius: 0 0 10px 10px; pointer-events: none; }
  .strip { display: flex; align-items: center; height: 40px; padding-left: 21px; background: #d1e1ff; }
  .ctab { display: flex; align-items: center; gap: 9px; position: relative; width: 232px; height: 34px; margin: 6px 0 0 19px; padding: 0 0 7px 9px; border-radius: 9px 9px 0 0; background: #fff; color: #222; font-size: 12px; }
  .ctab::before, .ctab::after { content: ""; position: absolute; bottom: 0; width: 10px; height: 10px; left: -10px; background: radial-gradient(circle at 0 0, transparent 10px, #fff 10.500px); }
  .ctab::after { left: 100%; background: radial-gradient(circle at 100% 0, transparent 10px, #fff 10.500px); }
  .ctab span:not(.t) { margin-left: 9px; }
  .new { margin-left: 13px; color: #444; }
  .ctools { display: flex; align-items: center; height: 47px; padding: 0 0 1px 4px; border-bottom: 1px solid #d4d6d8; background: #fff; color: #444; }
  .cell { display: grid; place-items: center; width: 36px; flex: none; }
  .off { color: #aaa; }
  .omni { display: flex; align-items: center; width: 410px; height: 34px; margin-left: 8px; padding-left: 5px; border-radius: 17px; background: #ecf1fb; color: #202326; font-size: 14px; }
  .tune { display: grid; place-items: center; width: 24px; height: 24px; margin-right: 8px; border-radius: 50%; background: #fff; }
  .omni em { font-style: normal; color: #565b61; }
  .fav { margin: 0 15px 0 auto; color: #444; }
  .ext { width: 52px; } .ava { width: 52px; }
  .ctools > i { width: 2px; height: 16px; background: #c9dcfc; }
  .update { display: flex; align-items: center; gap: 11px; width: 123px; height: 34px; margin-left: -4px; padding-left: 12px; border-radius: 17px; background: #d1e1ff; color: #0a2364; font-size: 13px; font-weight: 500; fill: #0a2364; }
  .page { color: #f8f8f8; }
  .phead { display: flex; align-items: center; height: 65px; padding: 0 0 1px 63.500px; border-bottom: 1px solid #f5f5f5; }
  .phead span:not(.t) { flex: none; }
  .cat { font-weight: 500; } .cd { margin: 0 41px 0 12px; }
  .h { margin-left: 166.500px; } .u { margin-left: 32px; } .ev { margin-left: 40.500px; font-weight: 500; } .ct { margin-left: 40.500px; }
  .logo { display: flex; align-items: baseline; width: 182px; height: 40px; line-height: 40px; font-family: "Liberation Serif", serif; color: #fff; flex: none; }
  .swash { font-style: italic; font-size: 39px; flex: none; transform-origin: 0 100%; }
  .swash.c { width: 23px; transform: scaleX(.88); }
  .swash.m { width: 42px; margin-left: 8px; transform: scaleX(1.200); }
  .caps { font-size: 17.500px; font-weight: 700; flex: none; }
  main { display: flex; flex-direction: column; align-items: center; height: 325px; padding-top: 32px; border-bottom: 1px solid #f5f5f5; }
  .crown { color: #63078f; }
  h1 { margin: 25px 0 15px; height: 36px; font: 700 32px/36px "Liberation Serif", serif; }
  main p, .about p { margin: 0; height: 24px; line-height: 24px; font-size: 16px; }
  .cta { display: grid; place-items: center; width: 448px; height: 40px; margin-top: 32px; padding-bottom: 1px; border-radius: 12px; background: #a50223; font-size: 18px; font-weight: 500; }
  footer { display: flex; height: 291px; padding: 48px 0 0 24px; }
  .about { width: 400px; padding-top: 8px; flex: none; }
  .about p:first-of-type { margin-top: 17px; }
  .col { width: 199px; padding-top: 16px; flex: none; }
  h4 { margin: 0 0 19px; height: 28px; font: 700 19px/28px "Liberation Serif", serif; }
  .col div { height: 20px; margin-bottom: 12px; line-height: 20px; font-weight: 500; }
  .col .late { margin-top: 108px; }
  .toast { position: absolute; left: 411px; top: 638px; width: 388px; height: 114px; padding: 25px; border-radius: 6px; background: #ff212c; color: #ffe8e8; line-height: 20px; z-index: 1; }
  .toast b { display: block; height: 20px; margin-bottom: 4px; color: #fff; font-weight: 600; }
  .toast div { height: 20px; }

  .dock { position: absolute; left: 43px; top: 832px; width: 1354px; height: 63px; display: flex; padding-left: 2px; border: 1px solid #7b7b7b; border-radius: 17px; background: #545454; }
  .slot { width: 52.060px; flex: none; display: flex; flex-direction: column; align-items: center; padding-top: 8px; }
  .slot i { width: 4px; height: 4px; margin-top: 8px; border-radius: 50%; }
  .slot i.on { background: #000; }
  .app { overflow: visible; }
  .sep { width: 1px; height: 46px; margin: 7px 10px 0 12px; background: #2a2a2a; }
  .sep.second { margin: 7px 11px 0 12px; }
</style>
